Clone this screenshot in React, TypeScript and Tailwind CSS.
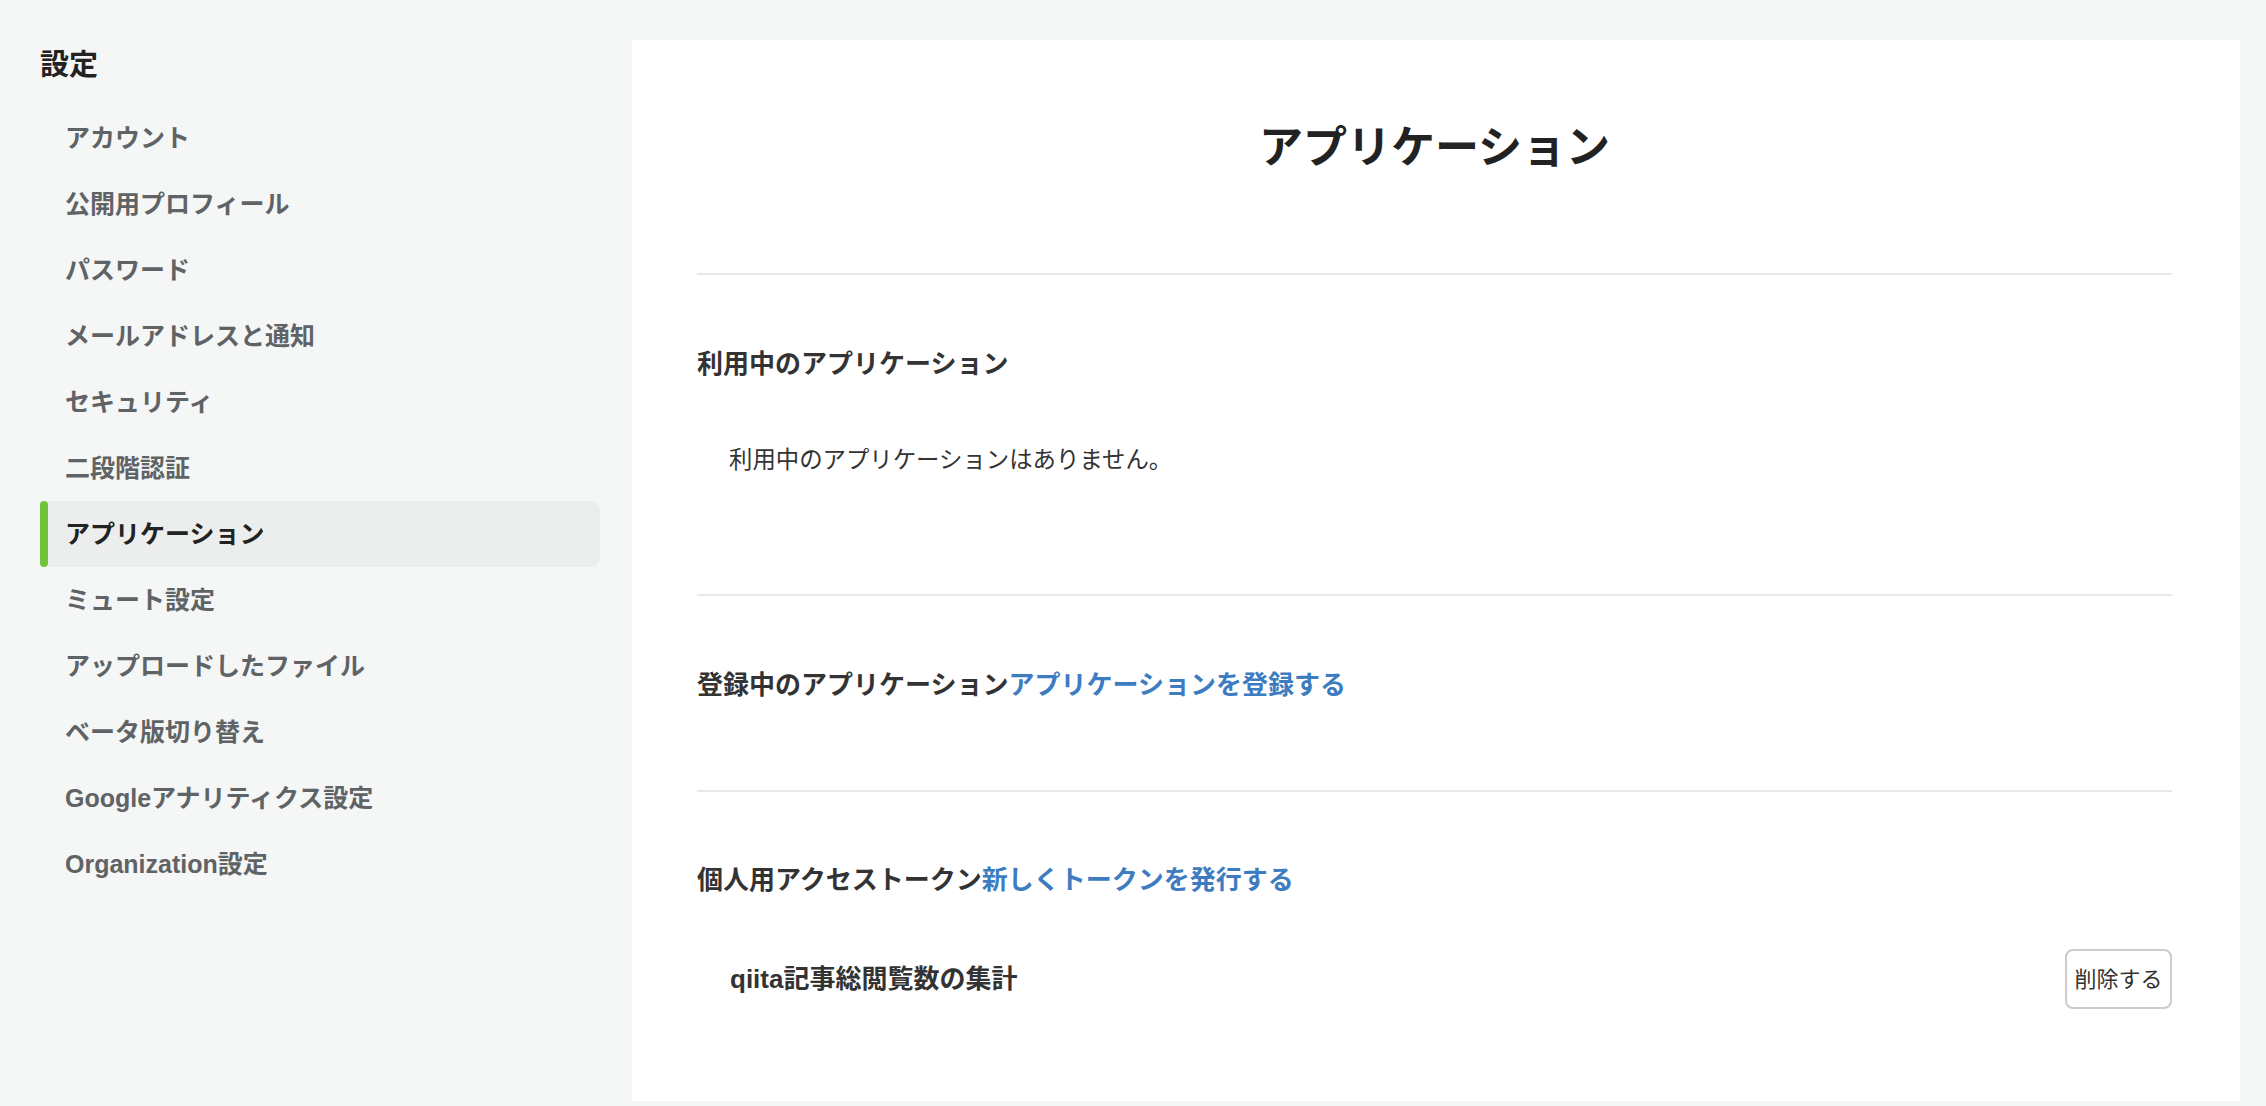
const navItems = [
  "アカウント",
  "公開用プロフィール",
  "パスワード",
  "メールアドレスと通知",
  "セキュリティ",
  "二段階認証",
  "アプリケーション",
  "ミュート設定",
  "アップロードしたファイル",
  "ベータ版切り替え",
  "Googleアナリティクス設定",
  "Organization設定",
];

const font = { fontFamily: '"Liberation Sans", "Noto Sans CJK JP", sans-serif' };

function Sidebar() {
  return (
    <aside className="w-[560px] shrink-0">
      <h1 className="mt-[5px] mb-[20px] text-[29px] leading-[40px] font-bold text-[#222]">設定</h1>
      <nav className="flex flex-col">
        {navItems.map((item) => {
          const active = item === "アプリケーション";
          return active ? (
            <div key={item} className="flex h-[66px] items-center rounded-[9px] bg-[#eceeee]">
              <div className="h-[66px] w-[8px] rounded-full bg-[#6fc43c]" />
              <span className="ml-[17px] pt-[2px] text-[25px] font-bold text-[#222]">{item}</span>
            </div>
          ) : (
            <div key={item} className="flex h-[66px] items-center pl-[25px] pt-[2px]">
              <span className="text-[25px] font-semibold text-[#606365]">{item}</span>
            </div>
          );
        })}
      </nav>
    </aside>
  );
}

export default function App() {
  return (
    <div className="flex h-[1106px] overflow-hidden bg-[#f5f6f6] pl-[40px] pr-[26px] pt-[40px]" style={font}>
      <Sidebar />
      <main className="ml-[32px] flex-1 self-start bg-white pl-[65px] pr-[68px] pt-[75px] pb-[92px]">
        <h2 className="text-center text-[44px] leading-[66px] font-bold text-[#222]">アプリケーション</h2>

        <section className="mt-[92px] border-t-2 border-[#e8e8e8] pt-[69px] pb-[116px]">
          <h3 className="text-[26px] leading-[40px] font-bold text-[#333]">利用中のアプリケーション</h3>
          <p className="mt-[58px] pl-[32px] text-[23.4px] leading-[36px] text-[#333]">
            利用中のアプリケーションはありません。
          </p>
        </section>

        <section className="border-t-2 border-[#e8e8e8] pt-[69px] pb-[85px]">
          <h3 className="text-[26px] leading-[40px] font-bold text-[#333]">
            登録中のアプリケーション
            <a href="#" className="text-[#3d7cc0]">アプリケーションを登録する</a>
          </h3>
        </section>

        <section className="border-t-2 border-[#e8e8e8] pt-[68px]">
          <h3 className="text-[26px] leading-[40px] font-bold text-[#333]">
            個人用アクセストークン
            <a href="#" className="text-[#3d7cc0]">新しくトークンを発行する</a>
          </h3>
          <div className="mt-[49px] flex items-center justify-between pl-[33px]">
            <span className="text-[26px] font-bold text-[#333]">qiita記事総閲覧数の集計</span>
            <button className="flex h-[60px] w-[107px] items-center justify-center rounded-[8px] border-2 border-[#cccccc] bg-white text-[22px] text-[#333]">
              削除する
            </button>
          </div>
        </section>
      </main>
    </div>
  );
}
